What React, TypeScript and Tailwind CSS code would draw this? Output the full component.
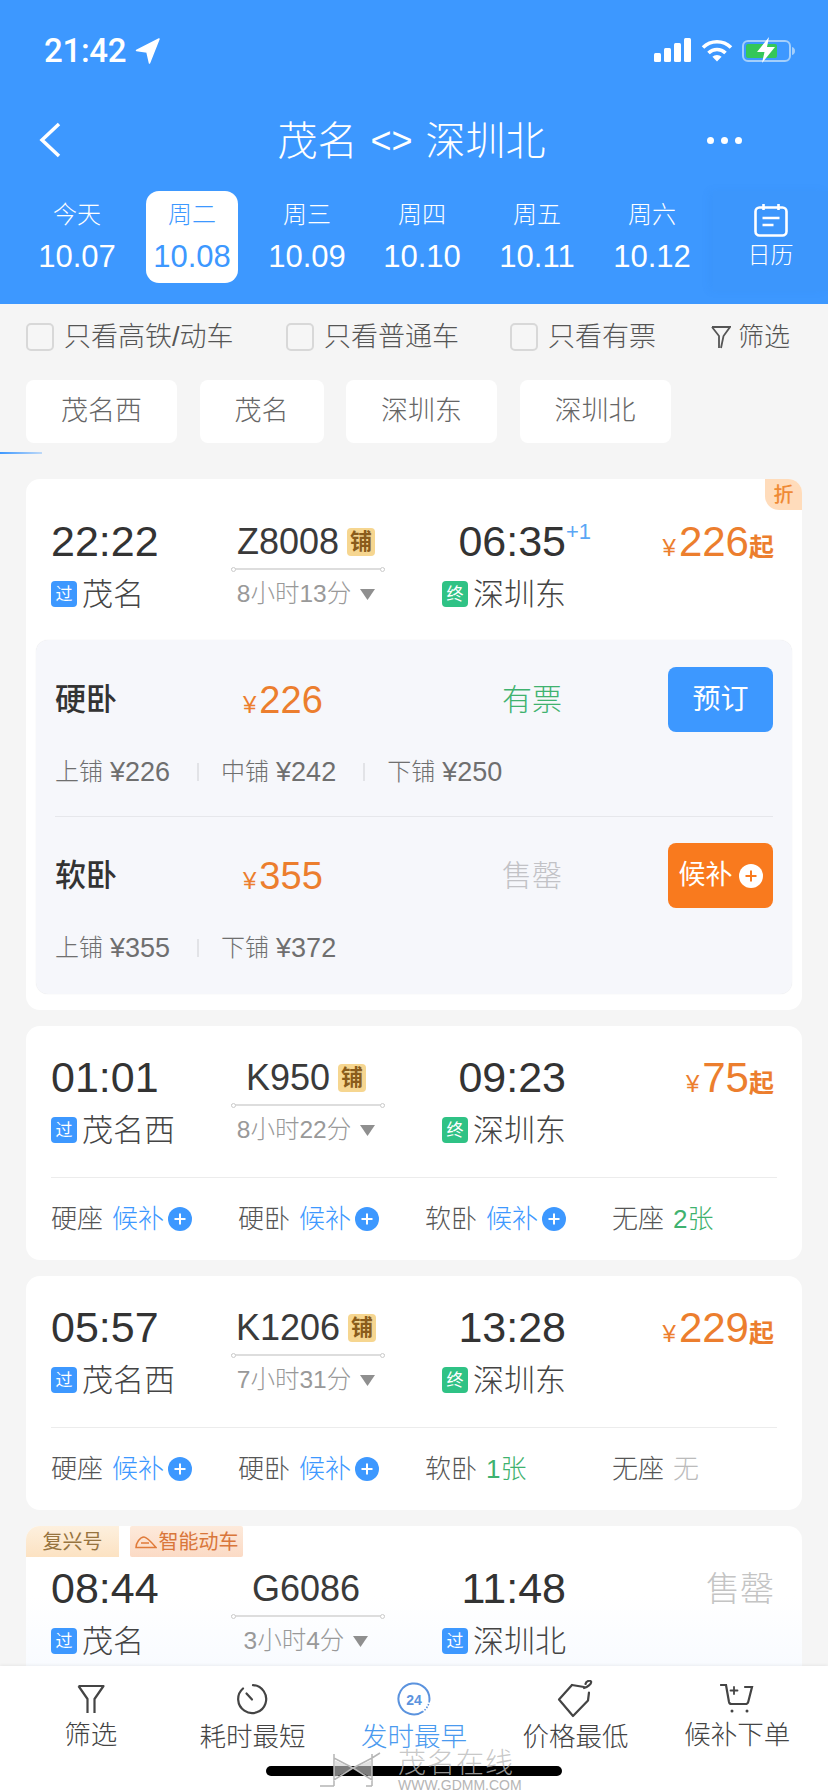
const fontStack = 'font-["Liberation_Sans","Noto_Sans_CJK_SC",sans-serif]';

const dates = [
  { day: '今天', date: '10.07' },
  { day: '周二', date: '10.08', active: true },
  { day: '周三', date: '10.09' },
  { day: '周四', date: '10.10' },
  { day: '周五', date: '10.11' },
  { day: '周六', date: '10.12' },
];

const PlusDot = ({ inverted = false }: { inverted?: boolean }) => (
  <svg width="24" height="24" viewBox="0 0 24 24" className="shrink-0">
    <circle cx="12" cy="12" r="12" fill={inverted ? '#ffffff' : '#3d98ff'} />
    <path d="M12 6.5v11M6.5 12h11" stroke={inverted ? '#f97a1e' : '#ffffff'} strokeWidth="2" />
  </svg>
);

const StatusBar = () => (
  <div className="flex h-[100px] items-center justify-between pr-[32px] pl-[44px]">
    <div className="flex items-center gap-[9px] pt-[1px]">
      <span className="font-['Roboto'] text-[33px] leading-none font-medium tracking-[-0.3px] text-white">21:42</span>
      <svg width="25" height="26" viewBox="0 0 25 26">
        <path d="M24 1 1.5 12.5l10.5 1.5 2.5 11z" fill="#ffffff" stroke="#ffffff" strokeWidth="1.5" strokeLinejoin="round" />
      </svg>
    </div>
    <div className="flex items-center">
      <svg width="37" height="24" viewBox="0 0 37 24" className="mr-[10px]">
        <rect x="0" y="15" width="7" height="9" rx="1.5" fill="#fff" />
        <rect x="10" y="10" width="7" height="14" rx="1.5" fill="#fff" />
        <rect x="20" y="5" width="7" height="19" rx="1.5" fill="#fff" />
        <rect x="30" y="0" width="7" height="24" rx="1.5" fill="#fff" />
      </svg>
      <svg width="32" height="23" viewBox="0 0 32 23" className="mr-[9px]" fill="none" stroke="#fff" strokeWidth="3.6">
        <path d="M2 8.5a20 20 0 0 1 28 0" />
        <path d="M7.5 14a12.2 12.2 0 0 1 17 0" />
        <path d="M16 22.5l-4.6-4.7a6.5 6.5 0 0 1 9.2 0z" fill="#fff" stroke="none" />
      </svg>
      <svg width="54" height="28" viewBox="0 0 54 28">
        <rect x="1" y="5" width="47" height="20" rx="5" fill="none" stroke="#a4cffb" strokeWidth="2" />
        <rect x="4" y="8" width="31" height="14" rx="2" fill="#34c759" />
        <path d="M50 11c2 .5 3 2 3 4s-1 3.500-3 4z" fill="#a4cffb" />
        <path d="M27 1 15 16h7.500L20 27l13-16h-8z" fill="#fff" />
      </svg>
    </div>
  </div>
);

const TitleBar = () => (
  <div className="flex h-[80px] items-center justify-between pr-[86px] pl-[38px]">
    <svg width="24" height="36" viewBox="0 0 24 36" fill="none" stroke="#fff" strokeWidth="3.5">
      <path d="M21 2 4 18l17 16" />
    </svg>
    <div className="mt-[2px] ml-[54px] flex items-center text-[40px] leading-none font-light text-white">
      <span>茂名</span>
      <span className="mx-[13px] text-[36px]">&lt;&gt;</span>
      <span>深圳北</span>
    </div>
    <div className="flex gap-[7px]">
      <span className="h-[7px] w-[7px] rounded-full bg-white" />
      <span className="h-[7px] w-[7px] rounded-full bg-white" />
      <span className="h-[7px] w-[7px] rounded-full bg-white" />
    </div>
  </div>
);

const DateBar = () => (
  <div className="flex h-[124px] items-start pt-[11px] pl-[31px]">
    <div className="flex gap-[23px]">
      {dates.map((d) => (
        <div
          key={d.date}
          className={`flex h-[92px] w-[92px] flex-col items-center rounded-[13px] pt-[9px] ${d.active ? 'bg-white text-[#3d98ff]' : 'text-white'}`}
        >
          <span className="h-[30px] text-[24px] leading-[30px] font-light">{d.day}</span>
          <span className="mt-[9px] text-[31px] leading-[36px]">{d.date}</span>
        </div>
      ))}
    </div>
    <div className="ml-[15px] flex h-[100px] w-[115px] flex-col items-center bg-[#3c96fc] pt-[12px] shadow-[-4px_0_8px_rgba(40,110,210,0.08)]">
      <svg width="34" height="34" viewBox="0 0 34 34" fill="none" stroke="#fff" strokeWidth="2.600">
        <rect x="1.500" y="4.500" width="31" height="28" rx="4" />
        <path d="M9.500 1v6M24.500 1v6M8.500 15h17M8.500 22h11" />
      </svg>
      <span className="mt-[3px] text-[23px] leading-[30px] font-light text-white">日历</span>
    </div>
  </div>
);

const FilterItem = ({ label, className = '' }: { label: string; className?: string }) => (
  <div className={`flex items-center gap-[10px] ${className}`}>
    <span className="h-[28px] w-[28px] rounded-[5px] border-2 border-[#d8d8d8] bg-[#f6f6f6]" />
    <span className="text-[27px] leading-none font-light text-[#555]">{label}</span>
  </div>
);

const FilterRow = () => (
  <div className="flex h-[66px] items-center pl-[26px]">
    <FilterItem label="只看高铁/动车" className="w-[260px]" />
    <FilterItem label="只看普通车" className="w-[224px]" />
    <FilterItem label="只看有票" className="w-[201px]" />
    <svg width="20" height="24" viewBox="0 0 20 24" fill="none" stroke="#555" strokeWidth="1.800" className="mr-[7px]">
      <path d="M1 2h18l-6.500 9v0L10 23M1 2l7 9v12" />
    </svg>
    <span className="text-[26px] leading-none font-light text-[#555]">筛选</span>
  </div>
);

const StationPills = () => (
  <div className="mt-[10px] flex gap-[22.5px] pl-[26px]">
    {['茂名西', '茂名', '深圳东', '深圳北'].map((s) => (
      <div key={s} className="flex h-[63px] items-center rounded-[8px] bg-white px-[35px] text-[27px] font-light text-[#666]">
        {s}
      </div>
    ))}
  </div>
);

const StationTag = ({ kind }: { kind: '过' | '终' }) => (
  <span
    className={`flex h-[26px] w-[26px] shrink-0 items-center justify-center rounded-[4px] text-[17px] leading-none text-white ${kind === '过' ? 'bg-[#3d98ff]' : 'bg-[#2fc285]'}`}
  >
    {kind}
  </span>
);

type HeadProps = {
  depart: string;
  arrive: string;
  train: string;
  berth?: boolean;
  plusDay?: boolean;
  from: string;
  to: string;
  toTag: '过' | '终';
  duration: string;
  price?: string;
};

const TrainHead = ({ depart, arrive, train, berth, plusDay, from, to, toTag, duration, price }: HeadProps) => (
  <div className="flex pr-[28px] pl-[25px]">
    <div className="flex w-[180px] flex-col">
      <div className="h-[44px] text-[43px] leading-[42px] text-[#333]">{depart}</div>
      <div className="mt-[14px] flex h-[32px] items-center gap-[5px]">
        <StationTag kind="过" />
        <span className="text-[31px] leading-none font-light text-[#444]">{from}</span>
      </div>
    </div>
    <div className="flex w-[154px] flex-col items-center">
      <div className="flex h-[44px] items-center gap-[8px] pr-[4px]">
        <span className="text-[36px] leading-none text-[#3a3a3a]">{train}</span>
        {berth && (
          <span className="flex h-[28px] w-[28px] items-center justify-center rounded-[4px] bg-[#f6d690] text-[22px] leading-none font-bold text-[#8a5c1c]">铺</span>
        )}
      </div>
      <div className="relative mt-[4px] h-[2px] w-full bg-[#dddddd]">
        <span className="absolute top-[-1.5px] left-0 h-[5px] w-[5px] rounded-full border border-[#cccccc] bg-white" />
        <span className="absolute top-[-1.5px] right-0 h-[5px] w-[5px] rounded-full border border-[#cccccc] bg-white" />
      </div>
      <div className="mt-[8px] flex h-[32px] items-center gap-[9px] pr-[4px]">
        <span className="text-[24.5px] leading-none font-light text-[#999]">{duration}</span>
        <svg width="15" height="11" viewBox="0 0 15 11">
          <path d="M0 0h15l-7.500 11z" fill="#8f8f8f" />
        </svg>
      </div>
    </div>
    <div className="flex w-[181px] flex-col items-end">
      <div className="relative h-[44px] text-[43px] leading-[42px] text-[#333]">
        {arrive}
        {plusDay && <span className="absolute top-[-3px] left-full text-[22px] leading-[30px] text-[#5aa6f5]">+1</span>}
      </div>
      <div className="mt-[14px] flex h-[32px] items-center gap-[5px]">
        <StationTag kind={toTag} />
        <span className="text-[31px] leading-none font-light text-[#444]">{to}</span>
      </div>
    </div>
    <div className="flex h-[44px] flex-1 items-center justify-end">
      {price ? (
        <div className="flex items-end text-[#ec7e2e]">
          <span className="mr-[3px] mb-[2px] text-[24px] leading-[28px]">¥</span>
          <span className="text-[42px] leading-[44px]">{price}</span>
          <span className="mb-[1px] text-[25px] leading-[32px] font-bold">起</span>
        </div>
      ) : (
        <span className="text-[34px] leading-none font-light text-[#c4c4c4]">售罄</span>
      )}
    </div>
  </div>
);

type Seat = { name: string; status: string; tone: 'wait' | 'green' | 'none' };

const SeatRow = ({ seats }: { seats: Seat[] }) => (
  <div className="mx-[25px] mt-[31px] grid h-[83px] grid-cols-[187px_187px_187px_1fr] items-center border-t border-[#ececec]">
    {seats.map((s) => (
      <div key={s.name} className="flex items-center text-[26px] leading-none font-light">
        <span className="mr-[9px] text-[#555]">{s.name}</span>
        <span className={s.tone === 'wait' ? 'text-[#3d98ff]' : s.tone === 'green' ? 'text-[#3fb26f]' : 'text-[#bbbbbb]'}>{s.status}</span>
        {s.tone === 'wait' && (
          <span className="ml-[4px]">
            <PlusDot />
          </span>
        )}
      </div>
    ))}
  </div>
);

const SubPrices = ({ items }: { items: [string, string][] }) => (
  <div className="mt-[20px] flex h-[40px] items-center leading-none font-light text-[#6f6f6f]">
    {items.map(([berth, price], i) => (
      <div key={berth} className="flex items-center">
        {i > 0 && <span className="mr-[22px] ml-[27px] h-[18px] w-[2px] bg-[#e2e3e7]" />}
        <span className="text-[24px]">{berth}</span>
        <span className="ml-[7px] text-[27px]">{price}</span>
      </div>
    ))}
  </div>
);

const SeatOption = ({ name, price, children, status }: { name: string; price: string; status: React.ReactNode; children: React.ReactNode }) => (
  <div className="flex h-[65px] items-center">
    <span className="w-[188px] text-[31px] leading-none font-medium text-[#333]">{name}</span>
    <div className="mt-[4px] flex w-[259px] items-baseline text-[#ec7e2e]">
      <span className="mr-[3px] text-[24px]">¥</span>
      <span className="text-[38px] leading-none">{price}</span>
    </div>
    <div className="flex-1 text-[30px] leading-none font-light">{status}</div>
    {children}
  </div>
);

const ExpandedPanel = () => (
  <div className="mx-[10px] mt-[30px] rounded-[12px] bg-[#f6f7fb] px-[19px] pt-[27px] pb-[26px] shadow-[0_0_1px_rgba(0,0,0,0.12)]">
    <SeatOption name="硬卧" price="226" status={<span className="text-[#3fb26f]">有票</span>}>
      <div className="flex h-[65px] w-[105px] items-center justify-center rounded-[8px] bg-[#3d98ff] text-[28px] text-white">预订</div>
    </SeatOption>
    <SubPrices items={[['上铺', '¥226'], ['中铺', '¥242'], ['下铺', '¥250']]} />
    <div className="mt-[24px] mb-[26px] h-px bg-[#e6e7eb]" />
    <SeatOption name="软卧" price="355" status={<span className="text-[#c2c2c6]">售罄</span>}>
      <div className="flex h-[65px] w-[105px] items-center justify-center gap-[6px] rounded-[8px] bg-[#f97a1e] text-[27px] text-white">
        <span>候补</span>
        <PlusDot inverted />
      </div>
    </SeatOption>
    <SubPrices items={[['上铺', '¥355'], ['下铺', '¥372']]} />
  </div>
);

const NavItem = ({ label, icon, active, low }: { label: string; icon: React.ReactNode; active?: boolean; low?: boolean }) => (
  <div className="flex w-[161.600px] flex-col items-center">
    <div className="flex h-[46px] items-center justify-center">{icon}</div>
    <span className={`${low ? 'mt-[-1px]' : 'mt-[-3px]'} text-[26.500px] leading-[32px] font-light ${active ? 'text-[#4a9aef]' : 'text-[#444]'}`}>{label}</span>
  </div>
);

const BottomNav = () => (
  <div className="relative z-10 flex h-[126px] shrink-0 bg-white px-[10px] pt-[10px] shadow-[0_-1px_3px_rgba(0,0,0,0.06)]">
    <NavItem
      label="筛选"
      icon={
        <svg width="28" height="30" viewBox="0 0 28 30" fill="none" stroke="#444" strokeWidth="2.200" strokeLinejoin="round">
          <path d="M1.500 2h25l-9 13v14M1.500 2l9 13v14" />
        </svg>
      }
    />
    <NavItem
      low
      label="耗时最短"
      icon={
        <svg width="32" height="32" viewBox="0 0 32 32" fill="none" stroke="#444" strokeWidth="2.200" strokeLinecap="round">
          <path d="M17 2.100A14 14 0 1 1 7 5.500" />
          <path d="M10.500 10.500l5.500 6" />
        </svg>
      }
    />
    <NavItem
      low
      active
      label="发时最早"
      icon={
        <svg width="34" height="34" viewBox="0 0 34 34" fill="none">
          <path d="M26 29.500A15.500 15.500 0 1 1 32.300 19" stroke="#5b93de" strokeWidth="2" />
          <path d="M32.300 19A15.500 15.500 0 0 1 26 29.500" stroke="#5b93de" strokeWidth="1.600" strokeDasharray="1.500 1.500" />
          <text x="17" y="22.500" textAnchor="middle" fontSize="14" fontWeight="700" fill="#5b93de" fontFamily="Liberation Sans">24</text>
        </svg>
      }
    />
    <NavItem
      low
      label="价格最低"
      icon={
        <svg width="38" height="38" viewBox="0 0 38 38" fill="none" stroke="#444" strokeWidth="2.200" strokeLinejoin="round" strokeLinecap="round">
          <path d="M15 5 2 19.500 16 36l15-15.500 1-8" />
          <path d="M15 5l12 2" />
          <path d="M27 8c3-1 8-4 7-6.500C33 0 29 1 28.500 4" />
        </svg>
      }
    />
    <NavItem
      label="候补下单"
      icon={
        <svg width="34" height="30" viewBox="0 0 34 30" fill="none" stroke="#444" strokeWidth="2.200" strokeLinecap="round">
          <path d="M1 1h5l3 17c.3 1.500 1 2 2.500 2h14c1.500 0 2.300-.5 2.700-2L32 3h-7" />
          <path d="M14 3v7M10.500 6.500h7" strokeWidth="1.800" />
          <circle cx="12" cy="27" r="1.500" fill="#444" stroke="none" />
          <circle cx="27" cy="27" r="1.500" fill="#444" stroke="none" />
        </svg>
      }
    />
    <div className="absolute top-[100px] left-[266px] h-[10px] w-[296px] rounded-full bg-black" />
    <div className="pointer-events-none absolute top-[86px] left-[320px] flex items-start">
      <svg width="66" height="36" viewBox="0 0 66 36" fill="none" stroke="#b5b5b5" strokeWidth="1.500">
        <path d="M14 2v32M0 34h14M33 16 14 6v22zM33 16l19-10v22zM52 2v32M52 34h-6M52 6l8-5" />
        <path d="M14 8l19 8-19 10z" fill="#cfcfcf" fillOpacity="0.6" stroke="none" />
        <path d="M52 8 33 16l19 10z" fill="#cfcfcf" fillOpacity="0.6" stroke="none" />
      </svg>
      <div className="ml-[12px] flex flex-col items-start">
        <span className="text-[28px] leading-[24px] font-light tracking-[1px] text-[#b9b9b9]/80">茂名在线</span>
        <span className="mt-[2px] text-[14px] leading-[14px] text-[#b5b5b5]">WWW.GDMM.COM</span>
      </div>
    </div>
  </div>
);

export default function App() {
  return (
    <div className={`relative flex h-[1792px] w-[828px] flex-col overflow-hidden bg-[#f5f5f5] ${fontStack}`}>
      <div className="shrink-0 bg-[#3d98ff]">
        <StatusBar />
        <TitleBar />
        <DateBar />
      </div>
      <div className="min-h-0 flex-1 overflow-hidden">
        <FilterRow />
        <StationPills />
        <div className="mt-[9px] h-[2px] w-[42px] bg-linear-to-r from-[#3d98ff] to-[#3d98ff]/30" />
        <div className="mx-[26px] mt-[25px] flex flex-col gap-[16px]">
          <div className="relative rounded-[14px] bg-white pt-[41px] pb-[16px]">
            <span className="absolute top-0 right-0 flex h-[31px] w-[37px] items-center justify-center rounded-tr-[14px] rounded-bl-[14px] bg-[#ffdcbb] text-[20px] leading-none font-medium text-[#ef8a35]">折</span>
            <TrainHead depart="22:22" arrive="06:35" plusDay train="Z8008" berth from="茂名" to="深圳东" toTag="终" duration="8小时13分" price="226" />
            <ExpandedPanel />
          </div>
          <div className="rounded-[14px] bg-white pt-[30px]">
            <TrainHead depart="01:01" arrive="09:23" train="K950" berth from="茂名西" to="深圳东" toTag="终" duration="8小时22分" price="75" />
            <SeatRow
              seats={[
                { name: '硬座', status: '候补', tone: 'wait' },
                { name: '硬卧', status: '候补', tone: 'wait' },
                { name: '软卧', status: '候补', tone: 'wait' },
                { name: '无座', status: '2张', tone: 'green' },
              ]}
            />
          </div>
          <div className="rounded-[14px] bg-white pt-[30px]">
            <TrainHead depart="05:57" arrive="13:28" train="K1206" berth from="茂名西" to="深圳东" toTag="终" duration="7小时31分" price="229" />
            <SeatRow
              seats={[
                { name: '硬座', status: '候补', tone: 'wait' },
                { name: '硬卧', status: '候补', tone: 'wait' },
                { name: '软卧', status: '1张', tone: 'green' },
                { name: '无座', status: '无', tone: 'none' },
              ]}
            />
          </div>
          <div className="relative h-[234px] rounded-[14px] bg-linear-to-b from-white from-30% to-[#f0f6ff] pt-[41px]">
            <div className="absolute top-0 left-0 flex">
              <span className="flex h-[31px] w-[93px] items-center justify-center rounded-tl-[14px] bg-linear-to-b from-[#fdf0de] to-[#fce2c2] text-[20px] leading-none text-[#97743f]">复兴号</span>
              <span className="ml-[11px] flex h-[31px] w-[113px] items-center justify-center gap-[2px] rounded-[2px] bg-linear-to-b from-[#fdeadb] to-[#fbdac5] text-[20px] leading-none text-[#d9763a]">
                <svg width="22" height="14" viewBox="0 0 22 14" fill="none" stroke="#e07b3a" strokeWidth="1.500">
                  <path d="M1 12.500C1 8 5 2 9 2c3 0 9 7 12 10.500zM6 8h8" />
                </svg>
                智能动车
              </span>
            </div>
            <TrainHead depart="08:44" arrive="11:48" train="G6086" from="茂名" to="深圳北" toTag="过" duration="3小时4分" />
          </div>
        </div>
      </div>
      <BottomNav />
    </div>
  );
}
